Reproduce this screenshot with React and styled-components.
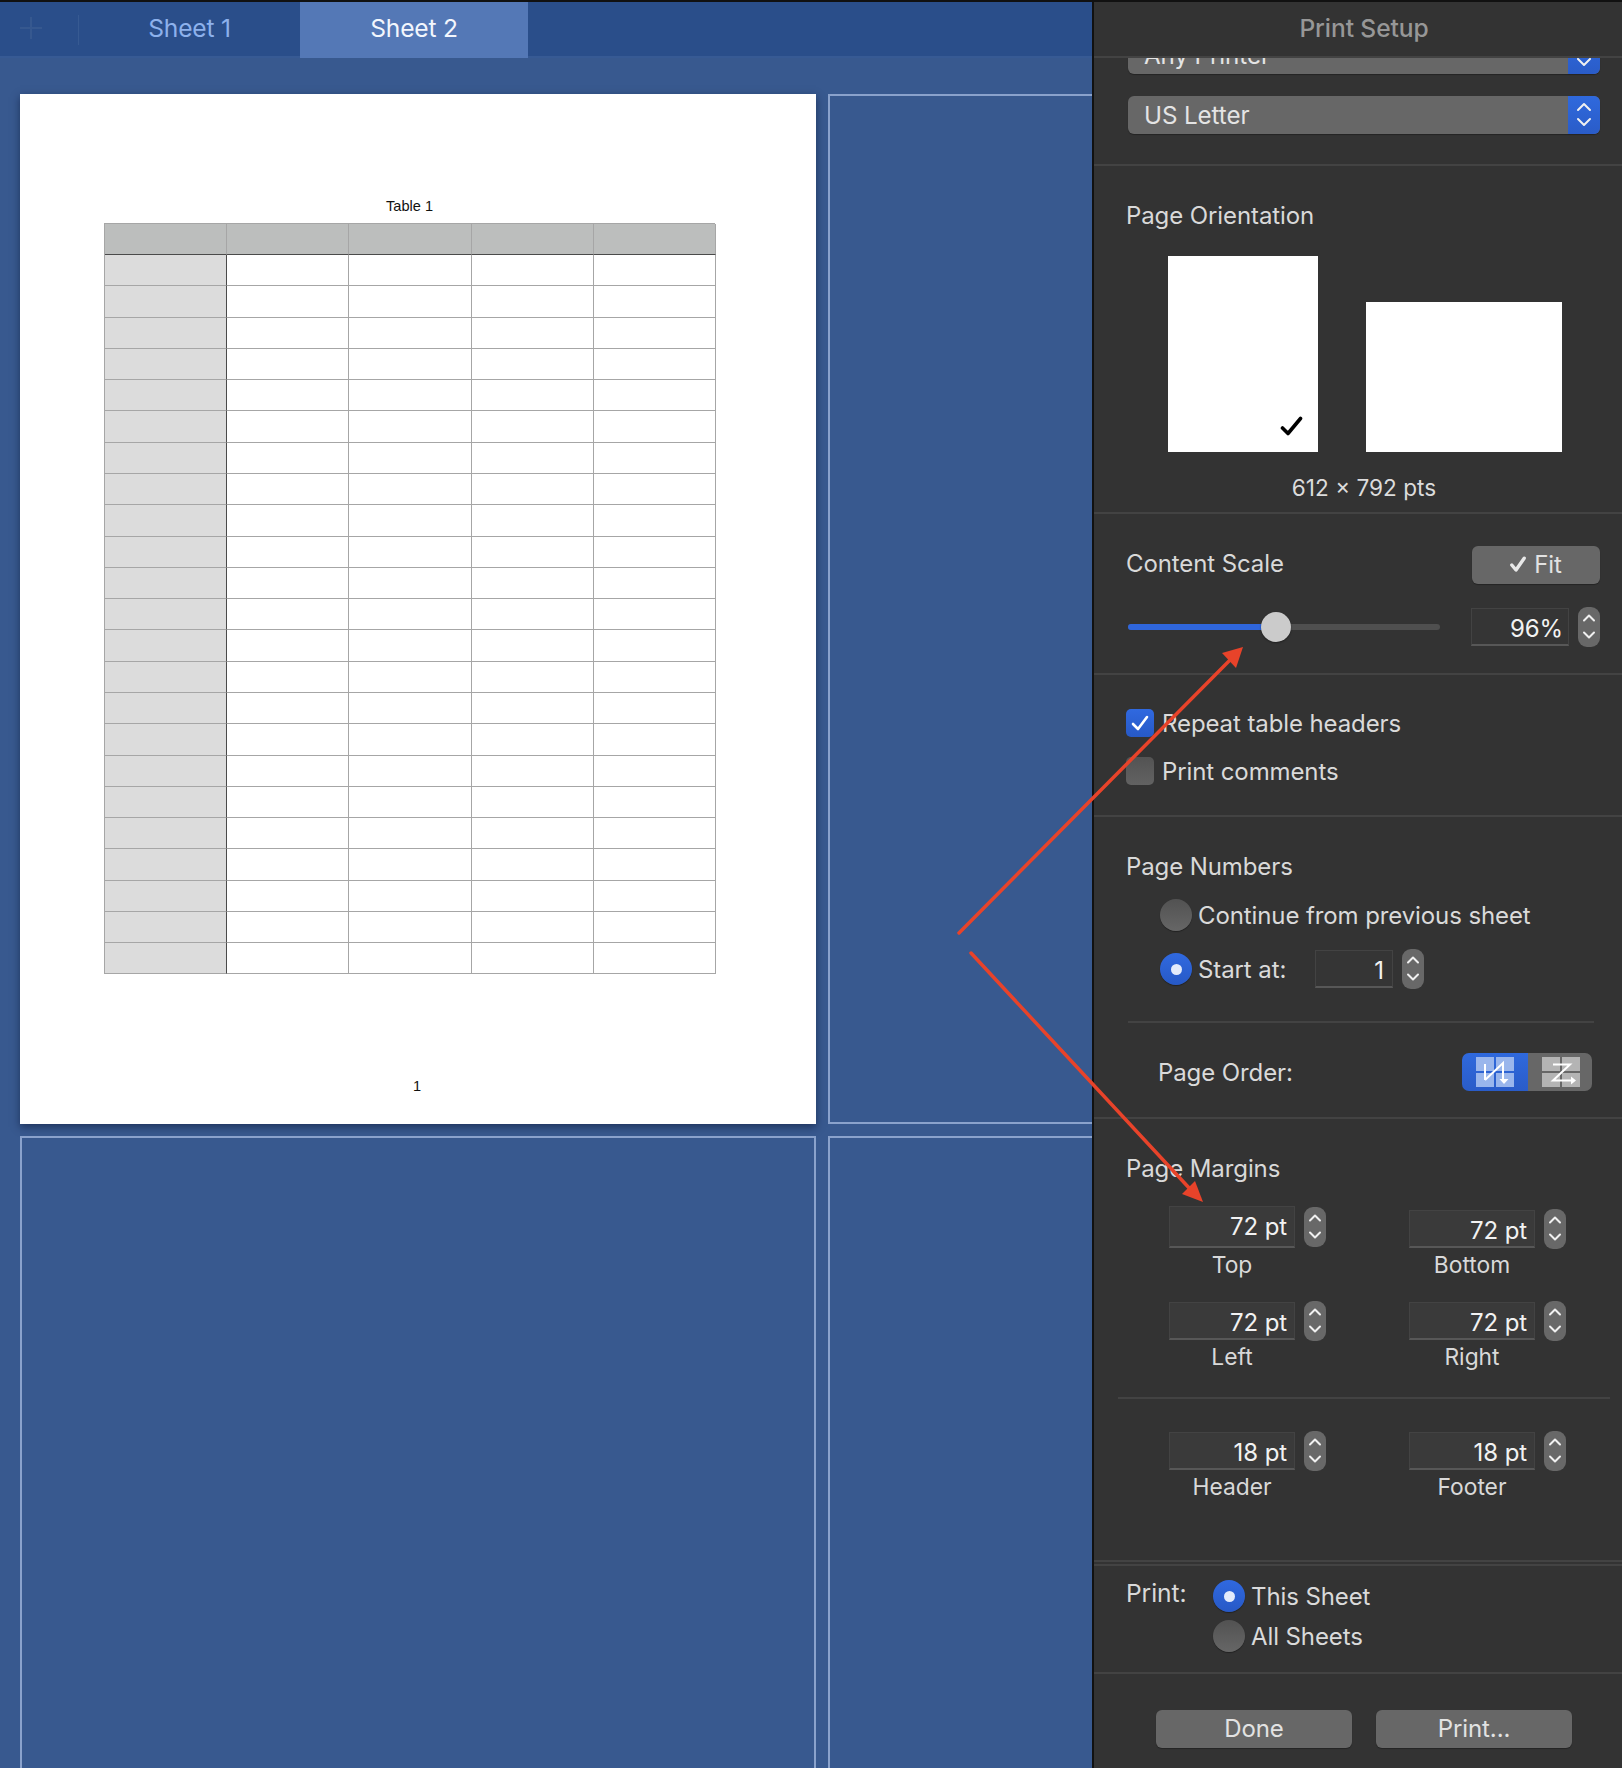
import React from 'react';
import styled, { createGlobalStyle } from 'styled-components';

const Global = createGlobalStyle`
  html, body { margin: 0; padding: 0; background: #333; }
  * { box-sizing: border-box; }
`;

const Window = styled.div`
  position: relative; width: 1622px; height: 1768px; overflow: hidden; display: flex;
  border-top: 2px solid #111; font-family: Inter, "Noto Sans", sans-serif; color: #d9d9d9;
`;
const Workspace = styled.div`
  width: 1092px; flex: none; display: flex; flex-direction: column; background: #38598f; overflow: hidden;
`;
const TabBar = styled.div`
  display: flex; height: 56px; background: #2a4e8a; border-bottom: 2px solid #375a94; flex: none;
`;
const PlusBox = styled.div`
  width: 79px; display: flex; align-items: center; justify-content: center; padding-right: 17px; padding-bottom: 2px;
  position: relative;
  &::after { content: ""; position: absolute; right: 0; top: 13px; height: 30px; width: 1px; background: #375a92; }
`;
const Anchor = styled.div`position: relative; flex: none;`;
const Tab = styled.div`
  width: ${p => p.$w}px; height: 56px; display: flex; align-items: center; justify-content: center;
  padding-bottom: 4px; font-size: 24.6px; letter-spacing: -0.2px;
  background: ${p => (p.$active ? '#5478b6' : 'transparent')};
  color: ${p => (p.$active ? '#f2f6fd' : '#8db1ec')};
`;
const Sheets = styled.div`
  flex: 1; display: grid; grid-template-columns: 796px 320px; grid-template-rows: 1030px 700px;
  column-gap: 12px; row-gap: 12px; padding: 36px 0 0 20px;
`;
const Page = styled.div`
  background: #fff; box-shadow: 0 3px 8px rgba(10, 20, 50, 0.55); padding: 103px 0 0 83.5px;
  font-family: "Liberation Sans", Arial, sans-serif; color: #111; font-size: 14.6px;
`;
const Ghost = styled.div`border: 2px solid #8aa2cc;`;
const TableTitle = styled.div`width: 612px; text-align: center; line-height: 18px; margin-bottom: 8px;`;
const SheetTable = styled.div`
  width: 611px; display: grid; grid-template-columns: 122px 122px 123px 122px 122px;
  grid-template-rows: 31px repeat(23, 31.29px);
  border-top: 1px solid #a6a6a6; border-left: 1px solid #a6a6a6;
`;
const Cell = styled.div`
  border-right: 1px solid ${p => (p.$stub && !p.$head ? '#4a4a4a' : '#a6a6a6')};
  border-bottom: 1px solid ${p => (p.$head ? '#4a4a4a' : '#a6a6a6')};
  background: ${p => (p.$head ? '#bcbebd' : p.$stub ? '#dcdcdc' : '#fff')};
`;
const PageNo = styled.div`width: 627px; text-align: center; line-height: 18px; margin-top: 103px;`;

const Panel = styled.div`
  width: 530px; flex: none; border-left: 2px solid #111; background: #333; display: flex; flex-direction: column;
`;
const PanelHead = styled.div`
  height: 56px; flex: none; border-bottom: 2px solid #434343; display: flex; align-items: center; justify-content: center;
  padding: 0 0 2px 12px; font-size: 24.6px; font-weight: 500; letter-spacing: -0.1px; color: #979797;
  position: relative; z-index: 1; background: #333;
`;
const Section = styled.div`
  height: ${p => p.$h}px; flex: none; overflow: hidden; border-bottom: 2px solid #434343;
  padding: ${p => p.$pt || 0}px 22px 0 33px;
`;
const PrinterSection = styled(Section)`padding-left: 34px;`;
const Popup = styled.div`
  height: 38px; border-radius: 6px; background: #676767; display: flex; align-items: center; justify-content: space-between;
  overflow: hidden; font-size: 24.2px; letter-spacing: -0.1px; color: #e4e4e4; padding-left: 16px;
  margin-top: ${p => p.$mt || 0}px; box-shadow: 0 1px 1px rgba(0,0,0,.3);
`;
const PopupArrows = styled.div`
  width: 32px; height: 38px; background: linear-gradient(#2f69dd, #2a5cc8); display: flex; align-items: center; justify-content: center;
`;
const Heading = styled.div`
  font-size: 24px; line-height: 28px; letter-spacing: -0.1px; color: #d9d9d9;
  margin-left: -1px; padding-top: 1px; margin-bottom: -1px;
`;
const ScaleHeading = styled(Heading)`margin-bottom: 4px;`;
const OrientRow = styled.div`display: flex; align-items: flex-end; gap: 48px; margin: 27px 0 0 41px;`;
const Sheet = styled.div`
  width: ${p => p.$w}px; height: ${p => p.$h}px; background: #fff; display: flex; align-items: flex-end; justify-content: flex-end;
  padding: 0 15px 16px 0;
`;
const SizeLabel = styled.div`
  margin: 22px 0 0 -33px; padding-left: 12px; width: 528px; text-align: center; font-size: 22.6px; line-height: 28px; color: #dcdcdc;
`;
const Row = styled.div`
  display: flex; align-items: center; justify-content: ${p => p.$between ? 'space-between' : 'flex-start'};
  margin-top: ${p => p.$mt || 0}px;
`;
const GrayButton = styled.div`
  width: ${p => p.$w}px; height: 38px; border-radius: 6px; background: #676767; display: flex; align-items: center; justify-content: center;
  gap: ${p => p.$gap || 0}px; padding-bottom: 2px; font-size: 24px; letter-spacing: -0.1px; color: #e2e2e2; box-shadow: 0 1px 1px rgba(0,0,0,.3);
`;
const Slider = styled.div`
  position: relative; width: 312px; height: 6px; margin-left: 1px; border-radius: 3px; background: #4f4f4f; margin-right: 31px;
`;
const SliderFill = styled.div`height: 6px; border-radius: 3px 0 0 3px; background: #2f66dc;`;
const Thumb = styled.div`
  position: absolute; top: -12px; left: 133px; width: 30px; height: 30px; border-radius: 50%; background: #cbcbcb;
  box-shadow: 0 1px 2px rgba(0,0,0,.4);
`;
const Input = styled.div`
  width: ${p => p.$w}px; height: ${p => p.$h || 38}px; background: ${p => p.$dark ? '#353535' : '#3a3a3a'};
  border: 1px solid #434343; border-bottom: 2px solid #575757; display: flex; align-items: center; justify-content: flex-end;
  padding: ${p => p.$tall ? 0 : 3}px ${p => p.$pr || 5}px 0 0; font-size: 24px; letter-spacing: -0.1px; color: #f2f2f2; flex: none;
`;
const Stepper = styled.div`
  width: 22px; height: 40px; border-radius: 9px; background: #686868; flex: none; margin-left: 9px; display: flex;
`;
const CheckRow = styled(Row)`height: 28px; margin-bottom: 20px; margin-left: -1px;`;
const Box = styled.div`
  width: 28px; height: 28px; border-radius: 5px; flex: none; display: flex; align-items: center; justify-content: center;
  background: ${p => p.$on ? 'linear-gradient(#3069e0, #2759c6)' : 'linear-gradient(#535353, #626262)'};
`;
const OptionText = styled.div`
  margin-left: ${p => p.$ml}px; font-size: 24px; letter-spacing: -0.1px; color: #dadada; white-space: nowrap;
  ${p => p.$w ? `width: ${p.$w}px;` : ''}
`;
const RadioRow = styled(Row)`height: 32px; margin: ${p => p.$mt || 0}px 0 0 ${p => p.$ml || 0}px;`;
const Radio = styled.div`
  width: 32px; height: 32px; border-radius: 50%; flex: none; display: flex; align-items: center; justify-content: center;
  background: ${p => p.$on ? 'linear-gradient(#3069e0, #2759c6)' : 'linear-gradient(#525252, #666)'};
  box-shadow: 0 1px 1px rgba(0,0,0,.35);
  &::after { content: ""; display: ${p => p.$on ? 'block' : 'none'}; width: 11px; height: 11px; border-radius: 50%; background: #e3ebfb; }
`;
const Rule = styled.div`height: 2px; background: #434343; margin: ${p => p.$m};`;
const OrderRow = styled(Row)`margin: 30px 8px 0 31px;`;
const Segments = styled.div`display: flex; height: 38px; width: 130px; border-radius: 7px; overflow: hidden;`;
const Segment = styled.div`
  width: ${p => p.$w}px; display: flex; align-items: center; justify-content: center; padding-left: ${p => p.$pl || 0}px;
  background: ${p => p.$on ? 'linear-gradient(#2f69dd, #2a5cc8)' : '#676767'};
`;
const MarginsSection = styled(Section)`padding-right: 0;`;
const FieldGrid = styled.div`
  display: grid; grid-template-columns: 240px 240px; row-gap: 23px; margin: ${p => p.$m};
`;
const FieldCell = styled.div`padding-top: ${p => p.$pt || 0}px;`;
const Controls = styled.div`display: flex; align-items: flex-end; margin-bottom: ${p => p.$mb || 0}px; height: ${p => p.$h}px;`;
const FieldStepper = styled(Stepper)`margin-bottom: ${p => p.$mb}px;`;
const FieldLabel = styled.div`width: 126px; text-align: center; font-size: 22.8px; line-height: 28px; margin-top: 3px; color: #d9d9d9;`;
const PrintSection = styled(Section)`
  margin-top: 2px; border-top: 2px solid #434343; padding-top: 14px; display: flex; align-items: flex-start;
`;
const PrintLabel = styled(Heading)`width: 87px; margin-top: -2px; font-size: 24.6px;`;
const RadioColumn = styled.div`display: flex; flex-direction: column; gap: 8px;`;
const Footer = styled.div`display: flex; gap: 24px; padding: 36px 0 0 62px;`;
const Overlay = styled.svg`position: absolute; left: 0; top: -2px; pointer-events: none; z-index: 5;`;

const Updown = ({ h = 40, up = 11, down = 28, w = 22, half = 5 }) => (
  <svg width={w} height={h} viewBox={`0 0 ${w} ${h}`} fill="none" stroke="#f0f0f0" strokeWidth="2" strokeLinecap="round" strokeLinejoin="round">
    <path d={`M${w / 2 - half} ${up + half / 2}L${w / 2} ${up - half / 2}L${w / 2 + half} ${up + half / 2}`} />
    <path d={`M${w / 2 - half} ${down - half / 2}L${w / 2} ${down + half / 2}L${w / 2 + half} ${down - half / 2}`} />
  </svg>
);
const StepperCtl = () => <Stepper><Updown /></Stepper>;
const Check = ({ w, h, d, color, sw }) => (
  <svg width={w} height={h} viewBox={`0 0 ${w} ${h}`} fill="none" stroke={color} strokeWidth={sw} strokeLinecap="round" strokeLinejoin="round"><path d={d} /></svg>
);
const Grid4 = ({ fill }) => (
  <g fill={fill}>
    <rect x="0" y="0" width="18" height="14" /><rect x="20" y="0" width="18" height="14" />
    <rect x="0" y="16" width="18" height="14" /><rect x="20" y="16" width="18" height="14" />
  </g>
);
const DownOver = () => (
  <svg width="38" height="30" viewBox="0 0 38 30">
    <Grid4 fill="#9ab6ec" />
    <path d="M9 23V7M9 23L27 6V22" fill="none" stroke="#fff" strokeWidth="2" />
    <path d="M23.5 22h9L28 27z" fill="#fff" />
  </svg>
);
const OverDown = () => (
  <svg width="38" height="30" viewBox="0 0 38 30">
    <Grid4 fill="#b4b4b4" />
    <path d="M11 7.5H28L11 23.5H29" fill="none" stroke="#fff" strokeWidth="2" />
    <path d="M29 19.5v8l5-4z" fill="#fff" />
  </svg>
);

const Field = ({ value, label, tall, offset }) => (
  <div>
    <Controls $h={tall ? 42 : 38} $mb={tall || offset ? 1 : 0}>
      <Input $w={126} $h={tall ? 42 : 38} $pr={7} $tall={tall}>{value}</Input>
      <FieldStepper $mb={tall ? 1 : -1}><Updown /></FieldStepper>
    </Controls>
    <FieldLabel>{label}</FieldLabel>
  </div>
);

const colCount = 5;
const rows = Array.from({ length: 24 });

export default function App() {
  return (
    <>
      <Global />
      <Window>
        <Workspace>
          <TabBar>
            <PlusBox>
              <svg width="22" height="22" viewBox="0 0 22 22" stroke="#36588f" strokeWidth="2"><path d="M11 0V22M0 11H22" /></svg>
            </PlusBox>
            <Tab $w={221}>Sheet 1</Tab>
            <Anchor><Tab $w={228} $active>Sheet 2</Tab></Anchor>
          </TabBar>
          <Sheets>
            <Page>
              <TableTitle>Table 1</TableTitle>
              <SheetTable>
                {rows.map((_, r) =>
                  Array.from({ length: colCount }).map((__, c) => <Cell key={`${r}-${c}`} $head={r === 0} $stub={c === 0} />)
                )}
              </SheetTable>
              <PageNo>1</PageNo>
            </Page>
            <Ghost /><Ghost /><Ghost />
          </Sheets>
        </Workspace>

        <Panel>
          <PanelHead>Print Setup</PanelHead>
          <PrinterSection $h={108}>
            <Popup $mt={-22}>Any Printer<PopupArrows><Updown w={32} h={38} up={11} down={26} half={6} /></PopupArrows></Popup>
            <Popup $mt={22}>US Letter<PopupArrows><Updown w={32} h={38} up={11} down={26} half={6} /></PopupArrows></Popup>
          </PrinterSection>

          <Section $h={348} $pt={35}>
            <Heading>Page Orientation</Heading>
            <OrientRow>
              <Sheet $w={150} $h={196}><Check w={23} h={20} d="M2.5 12L8 17.5L20.5 2.5" color="#000" sw={3.6} /></Sheet>
              <Sheet $w={196} $h={150} />
            </OrientRow>
            <SizeLabel>612 × 792 pts</SizeLabel>
          </Section>

          <Section $h={161} $pt={32}>
            <Row $between>
              <ScaleHeading>Content Scale</ScaleHeading>
              <GrayButton $w={128} $gap={8}><Check w={16} h={16} d="M1.8 9L6 14L14.2 2.2" color="#e8e8e8" sw={3.4} />Fit</GrayButton>
            </Row>
            <Row $mt={23}>
              <Slider><SliderFill style={{ width: 148 }} /><Thumb /></Slider>
              <Input $w={98} $dark>96%</Input>
              <StepperCtl />
            </Row>
          </Section>

          <Section $h={142} $pt={34}>
            <CheckRow>
              <Box $on><Check w={18} h={16} d="M2 9L7 14L16 2" color="#fff" sw={2.6} /></Box>
              <OptionText $ml={8}>Repeat table headers</OptionText>
            </CheckRow>
            <CheckRow>
              <Box />
              <OptionText $ml={8}>Print comments</OptionText>
            </CheckRow>
          </Section>

          <Section $h={302} $pt={35}>
            <Heading>Page Numbers</Heading>
            <RadioRow $mt={19} $ml={33}><Radio /><OptionText $ml={6}>Continue from previous sheet</OptionText></RadioRow>
            <RadioRow $mt={22} $ml={33}>
              <Radio $on /><OptionText $ml={6} $w={117}>Start at:</OptionText>
              <Input $w={78} $dark $pr={8}>1</Input><StepperCtl />
            </RadioRow>
            <Rule $m="36px 6px 0 1px" />
            <OrderRow $between>
              <OptionText $ml={0}>Page Order:</OptionText>
              <Segments>
                <Segment $w={66} $on><DownOver /></Segment>
                <Segment $w={64} $pl={2}><OverDown /></Segment>
              </Segments>
            </OrderRow>
          </Section>

          <MarginsSection $h={443} $pt={35}>
            <Heading>Page Margins</Heading>
            <FieldGrid $m="24px 0 0 42px">
              <Field value="72 pt" label="Top" tall />
              <FieldCell $pt={4}><Field value="72 pt" label="Bottom" offset /></FieldCell>
              <Field value="72 pt" label="Left" />
              <Field value="72 pt" label="Right" />
            </FieldGrid>
            <Rule $m="26px 12px 0 -9px" />
            <FieldGrid $m="33px 0 0 42px">
              <Field value="18 pt" label="Header" />
              <Field value="18 pt" label="Footer" />
            </FieldGrid>
          </MarginsSection>

          <PrintSection $h={110}>
            <PrintLabel>Print:</PrintLabel>
            <RadioColumn>
              <RadioRow><Radio $on /><OptionText $ml={6}>This Sheet</OptionText></RadioRow>
              <RadioRow><Radio /><OptionText $ml={6}>All Sheets</OptionText></RadioRow>
            </RadioColumn>
          </PrintSection>

          <Footer>
            <GrayButton $w={196}>Done</GrayButton>
            <GrayButton $w={196}>Print...</GrayButton>
          </Footer>
        </Panel>

        <Overlay width="1622" height="1768" viewBox="0 0 1622 1768">
          <path d="M959 933L1231 659" stroke="#e8432a" strokeWidth="3.5" fill="none" strokeLinecap="round" />
          <path d="M1243 647L1222 653L1236 668Z" fill="#e8432a" />
          <path d="M971 953L1191 1190" stroke="#e8432a" strokeWidth="3.5" fill="none" strokeLinecap="round" />
          <path d="M1203 1202L1182 1194L1195 1181Z" fill="#e8432a" />
        </Overlay>
      </Window>
    </>
  );
}
